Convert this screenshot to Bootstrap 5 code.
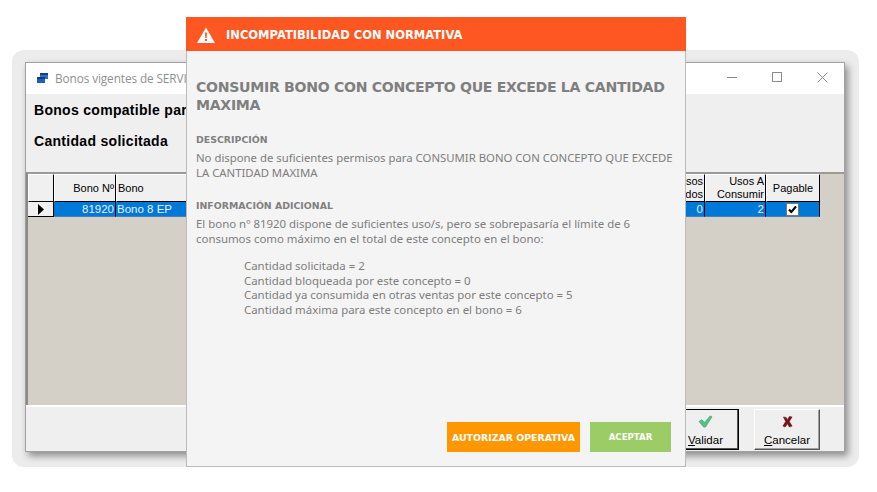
<!DOCTYPE html>
<html lang="es">
<head>
    <meta charset="UTF-8">
    <title>Incompatibilidad con normativa</title>
    <link href="https://cdn.jsdelivr.net/npm/bootstrap@5.3.0/dist/css/bootstrap.min.css" rel="stylesheet">
    <style>
        html, body { margin: 0; height: 492px; overflow: hidden; background: #fff; }
        .desk { position: relative; width: 877px; height: 492px; }
        .halo { position: absolute; left: 12px; top: 50px; width: 847px; height: 417px; background: #ececec; border-radius: 12px; }
        .oldwin { position: absolute; left: 25px; top: 62px; width: 820px; height: 390px; background: #efefef; border: 1px solid #a0a0a0; box-shadow: 3px 4px 7px rgba(0,0,0,.4); }
        .oldtitle { height: 31px; background: #fff; padding: 0 0 2px 10px; font: 11.8px "Open Sans", sans-serif; letter-spacing: -.1px; color: #8f8f8f; }
        .oldtitle .ttl { margin-left: 6px; white-space: nowrap; }
        .winbtns { margin-left: auto; gap: 34px; padding-right: 16px; }
        .infozone { height: 78px; padding: 0 0 16px 8px; font: bold 14px "Liberation Sans", sans-serif; letter-spacing: .3px; color: #000; white-space: nowrap; }
        .infozone div { height: 32px; }
        .gridzone { height: 233px; background: #d4d0c8; border-top: 2px solid #9a9a9a; border-left: 2px solid #8a8a8a; }
        .gridtbl { table-layout: fixed; border-collapse: separate; border-spacing: 0; width: 792px; font: 11.5px/13px "Liberation Sans", sans-serif; color: #000; }
        .gridtbl th { height: 28px; background: #f0f0f0; font-size: 11px; font-weight: 400; border-right: 1px solid #000; border-bottom: 1px solid #000; border-top: 1px solid #fff; border-left: 1px solid #fff; padding: 0 1px; overflow: hidden; white-space: nowrap; }
        .gridtbl td { height: 15px; background: #0078d7; color: #e8f3ff; border-right: 1px solid #000; border-bottom: 1px solid #4a7fb0; padding: 0 1px; white-space: nowrap; overflow: hidden; }
        .gridtbl td.mark { background: #f0f0f0; border-bottom: 1px solid #000; padding: 0; text-align: center; line-height: 0; }
        .ta-r { text-align: right; }
        .ta-c { text-align: center; }
        .chkbox { display: inline-block; width: 13px; height: 13px; background: #fff; border: 1px solid #777; line-height: 0; vertical-align: top; }
        .oldfoot { height: 46px; border-top: 2px solid #fff; padding: 2px 24px 0 0; gap: 15px; }
        .oldbtn { height: 41px; background: #efefef; border: 1px solid; border-color: #fff #555 #555 #fff; box-shadow: inset -1px -1px 0 #a0a0a0; font: 11.5px/12px "Liberation Sans", sans-serif; color: #000; padding: 5px 0 0; gap: 6px; }
        .btn-val { width: 67px; border-color: #000; box-shadow: inset -1px -1px 0 #555; }
        .btn-can { width: 66px; }
        .alertbox { position: absolute; left: 186px; top: 17px; width: 500px; height: 450px; background: #f4f4f4; border: 1px solid #bbb; border-top: 0; color: #7d7d7d; font: 11.35px/14.5px "Noto Sans", sans-serif; }
        .alerthead { height: 34px; background: #ff5722; margin: 0 -1px; padding: 1px 0 0 11px; gap: 11px; color: #fff; font: bold 11.5px "DejaVu Sans", sans-serif; }
        .alertbody { padding: 0 5px 0 9px; }
        .alerttitle { font: bold 14.1px/18px "DejaVu Sans", sans-serif; letter-spacing: -.3px; color: #7f7f7f; margin: 27px 4px 19px 0; }
        .alertsub { font: bold 9.4px/13px "DejaVu Sans", sans-serif; color: #808080; margin-bottom: 5px; }
        .alerttxt { margin-bottom: 19px; }
        .alertwide { font-size: 11.42px; margin-top: 5px; }
        .alertlist { margin-top: -6px; padding-left: 48px; font-size: 11.42px; line-height: 14.7px; }
        .alertbtns { padding: 0 14px 14px 0; gap: 10px; }
        .flatbtn { height: 30px; border: 0; border-radius: 0; padding: 0; color: #fff; white-space: nowrap; font: bold 9.4px "DejaVu Sans", sans-serif; }
        .flatbtn:hover { color: #fff; }
        .btn-aut { width: 133px; background: #ff9800; }
        .btn-ace { width: 81px; background: #9ccc65; font-size: 8.6px; }
    </style>
</head>
<body>
<div class="desk">
    <div class="halo"></div>

    <div class="oldwin d-flex flex-column">
        <div class="oldtitle d-flex align-items-center">
            <svg width="13" height="12" viewBox="0 0 13 12"><rect x="4" y="1" width="8" height="6" fill="#2f6fc0"/><rect x="4" y="1" width="8" height="2" fill="#1a3f80"/><rect x="1" y="5" width="8" height="6" fill="#1f5fb5"/><rect x="1" y="5" width="8" height="2" fill="#123a80"/></svg>
            <span class="ttl">Bonos vigentes de SERVICIO</span>
            <div class="winbtns d-flex align-items-center">
                <svg width="11" height="11" viewBox="0 0 11 11"><path d="M0 5.500h10" stroke="#8a8a8a" fill="none"/></svg>
                <svg width="11" height="11" viewBox="0 0 11 11"><rect x=".5" y=".5" width="9" height="9" stroke="#8a8a8a" fill="none"/></svg>
                <svg width="11" height="11" viewBox="0 0 11 11"><path d="M.5.5l10 10M10.500.5l-10 10" stroke="#8a8a8a" fill="none"/></svg>
            </div>
        </div>
        <div class="infozone d-flex flex-column justify-content-center">
            <div class="d-flex align-items-center">Bonos compatible para</div>
            <div class="d-flex align-items-center">Cantidad solicitada</div>
        </div>
        <div class="gridzone flex-grow-1">
            <table class="gridtbl">
                <colgroup>
                    <col style="width:26px"><col style="width:62px"><col style="width:525px"><col style="width:64px"><col style="width:61px"><col style="width:54px">
                </colgroup>
                <tr>
                    <th></th>
                    <th class="ta-r">Bono Nº</th>
                    <th>Bono</th>
                    <th class="ta-r">Usos<br>Usados</th>
                    <th class="ta-r">Usos A<br>Consumir</th>
                    <th class="ta-c">Pagable</th>
                </tr>
                <tr>
                    <td class="mark"><svg width="8" height="11" viewBox="0 0 8 11"><path d="M1 0l6 5.500L1 11z" fill="#000"/></svg></td>
                    <td class="ta-r">81920</td>
                    <td>Bono 8 EP</td>
                    <td class="ta-r">0</td>
                    <td class="ta-r">2</td>
                    <td class="ta-c"><span class="chkbox"><svg width="11" height="11" viewBox="0 0 11 11"><path d="M2 5.500l2.300 2.500L9 2.500" stroke="#000" stroke-width="2" fill="none"/></svg></span></td>
                </tr>
            </table>
        </div>
        <div class="oldfoot d-flex justify-content-end">
            <button type="button" class="oldbtn btn-val d-flex flex-column align-items-center">
                <svg width="15" height="13" viewBox="0 0 16 14"><path d="M1 7l3-2 3 3 6-7 2 1-7 11H6z" fill="#4fc483" stroke="#2e9a60" stroke-width=".6"/></svg>
                <span><u>V</u>alidar</span>
            </button>
            <button type="button" class="oldbtn btn-can d-flex flex-column align-items-center">
                <svg width="11" height="13" viewBox="0 0 12 14"><path d="M1.500 2l3 .5L6 5l2-3.500 3 .5L8 7l3 5-3 1-2-3.500L3.500 13 1 12l3-5z" fill="#7d1414" stroke="#4d0a0a" stroke-width=".5"/></svg>
                <span><u>C</u>ancelar</span>
            </button>
        </div>
    </div>

    <div class="alertbox d-flex flex-column">
        <div class="alerthead d-flex align-items-center flex-shrink-0">
            <svg width="18" height="16" viewBox="0 0 18 16"><path d="M9 0.500L18 16H0z" fill="#fff"/><path d="M8 5.500h2l-.3 5.500H8.300zM8 12h2v2H8z" fill="#ff5722"/></svg>
            <span>INCOMPATIBILIDAD CON NORMATIVA</span>
        </div>
        <div class="alertbody flex-grow-1">
            <div class="alerttitle">CONSUMIR BONO CON CONCEPTO QUE EXCEDE LA CANTIDAD MAXIMA</div>
            <div class="alertsub">DESCRIPCIÓN</div>
            <div class="alerttxt">No dispone de suficientes permisos para CONSUMIR BONO CON CONCEPTO QUE EXCEDE<br>LA CANTIDAD MAXIMA</div>
            <div class="alertsub">INFORMACIÓN ADICIONAL</div>
            <div class="alerttxt alertwide">El bono nº 81920 dispone de suficientes uso/s, pero se sobrepasaría el límite de 6<br>consumos como máximo en el total de este concepto en el bono:</div>
            <div class="alertlist">
                <div>Cantidad solicitada = 2</div>
                <div>Cantidad bloqueada por este concepto = 0</div>
                <div>Cantidad ya consumida en otras ventas por este concepto = 5</div>
                <div>Cantidad máxima para este concepto en el bono = 6</div>
            </div>
        </div>
        <div class="alertbtns d-flex justify-content-end flex-shrink-0">
            <button type="button" class="btn flatbtn btn-aut">AUTORIZAR OPERATIVA</button>
            <button type="button" class="btn flatbtn btn-ace">ACEPTAR</button>
        </div>
    </div>
</div>
<script src="https://cdn.jsdelivr.net/npm/bootstrap@5.3.0/dist/js/bootstrap.bundle.min.js"></script>
</body>
</html>
